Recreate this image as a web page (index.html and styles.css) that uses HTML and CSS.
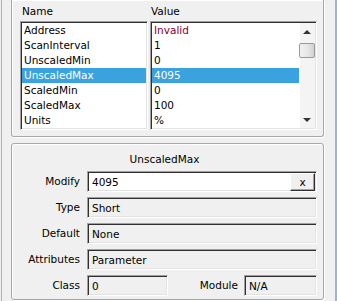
FILE: index.html
```html
<!DOCTYPE html>
<html lang="en">
<head>
    <meta charset="UTF-8">
    <meta name="viewport" content="width=device-width, initial-scale=1.0">
    <title>Parameter Editor</title>
    <link rel="stylesheet" href="styles.css">
</head>
<body>
    <div class="window">
        <!-- Parameter list -->
        <div class="group list-group">
            <div class="list-head">
                <span class="head-name">Name</span>
                <span class="head-value">Value</span>
            </div>
            <div class="lists">
                <div class="listbox names">
                    <div class="row">Address</div>
                    <div class="row">ScanInterval</div>
                    <div class="row">UnscaledMin</div>
                    <div class="row selected">UnscaledMax</div>
                    <div class="row">ScaledMin</div>
                    <div class="row">ScaledMax</div>
                    <div class="row">Units</div>
                </div>
                <div class="listbox values">
                    <div class="rows">
                        <div class="row invalid">Invalid</div>
                        <div class="row">1</div>
                        <div class="row">0</div>
                        <div class="row selected">4095</div>
                        <div class="row">0</div>
                        <div class="row">100</div>
                        <div class="row">%</div>
                    </div>
                    <div class="scrollbar">
                        <div class="scroll-btn"><span class="arrow-up"></span></div>
                        <div class="thumb"></div>
                        <div class="scroll-track"></div>
                        <div class="scroll-btn"><span class="arrow-down"></span></div>
                    </div>
                </div>
            </div>
        </div>

        <!-- Selected parameter details -->
        <div class="group detail-group">
            <div class="detail-title">UnscaledMax</div>
            <div class="form">
                <label class="label">Modify</label>
                <div class="field editable">
                    <span class="field-text">4095</span>
                    <button class="clear-button">x</button>
                </div>

                <label class="label">Type</label>
                <div class="field"><span class="field-text">Short</span></div>

                <label class="label">Default</label>
                <div class="field"><span class="field-text">None</span></div>

                <label class="label">Attributes</label>
                <div class="field"><span class="field-text">Parameter</span></div>

                <label class="label">Class</label>
                <div class="last-row">
                    <div class="field class-field"><span class="field-text">0</span></div>
                    <label class="label">Module</label>
                    <div class="field"><span class="field-text">N/A</span></div>
                </div>
            </div>
        </div>
    </div>
</body>
</html>
```

FILE: styles.css
```css
* {
    box-sizing: border-box;
}
body {
    margin: 0;
    background-color: #f0f0f0;
    font-family: "DejaVu Sans", Tahoma, sans-serif;
    font-size: 10.5px;
    color: #000;
    overflow: hidden;
}
.window {
    width: 336px;
    height: 301px;
    margin-left: 1px;
    padding: 0 10px 0 9px;
    border-left: 1px solid #8fb8e3;
    border-right: 2px solid #8fb8e3;
}
/* Etched group box */
.group {
    width: 313px;
    border: 1px solid #a8a8a8;
    border-radius: 3px;
    box-shadow: 1px 1px 0 #fff, inset 1px 1px 0 #fff;
}
.list-group {
    border-top: none;
    border-radius: 0 0 3px 3px;
    padding: 4px 6px 6px 8px;
}
.list-head,
.lists {
    display: grid;
    grid-template-columns: 128px 167px;
    column-gap: 2px;
}
.list-head {
    line-height: 15px;
    height: 15px;
    margin-bottom: 2px;
}
.head-name {
    padding-left: 2px;
}
.head-value {
    padding-left: 1px;
}
/* Sunken list boxes */
.listbox {
    height: 109px;
    background-color: #fff;
    border: 1px solid;
    border-color: #a0a0a0 #fff #fff #a0a0a0;
    box-shadow: inset 1px 1px 0 #303030, inset -1px -1px 0 #e3e3e3;
    padding: 1px;
}
.values {
    display: flex;
}
.rows {
    flex: 1;
}
.row {
    height: 15px;
    line-height: 15px;
    padding-left: 2px;
    white-space: nowrap;
}
.row.selected {
    background-color: #3aa2df;
    color: #fff;
}
.row.invalid {
    color: #8e0028;
}
.scrollbar {
    width: 16px;
    display: flex;
    flex-direction: column;
    background-color: #f4f4f4;
    box-shadow: inset 1px 0 0 #fff;
}
.scroll-btn {
    height: 17px;
    display: flex;
    align-items: center;
    justify-content: center;
}
.arrow-up {
    width: 0;
    height: 0;
    border-left: 4px solid transparent;
    border-right: 4px solid transparent;
    border-bottom: 4px solid #333;
}
.arrow-down {
    width: 0;
    height: 0;
    border-left: 4px solid transparent;
    border-right: 4px solid transparent;
    border-top: 4px solid #333;
}
.thumb {
    height: 15px;
    margin-top: 3px;
    border: 1px solid #9a9a9a;
    border-radius: 2px;
    background: linear-gradient(to right, #f2f2f2, #e4e4e4 60%, #d2d2d2);
}
.scroll-track {
    flex: 1;
}
/* Detail panel */
.detail-group {
    margin-top: 6px;
    height: 157px;
    padding: 8px 6px 3px 0;
}
.detail-title {
    text-align: center;
    line-height: 15px;
    margin-bottom: 4px;
}
.form {
    display: grid;
    grid-template-columns: 68px 1fr;
    grid-auto-rows: 21px;
    column-gap: 7px;
    row-gap: 5px;
}
.label {
    text-align: right;
    line-height: 21px;
    white-space: nowrap;
}
.field {
    display: flex;
    align-items: center;
    height: 21px;
    border: 1px solid;
    border-color: #a0a0a0 #fff #fff #a0a0a0;
    box-shadow: inset 1px 1px 0 #303030, inset -1px -1px 0 #e3e3e3;
    background-color: #f0f0f0;
    padding: 0 1px 0 4px;
}
.field.editable {
    background-color: #fff;
}
.field-text {
    flex: 1;
    white-space: nowrap;
}
.clear-button {
    width: 25px;
    height: 18px;
    margin-top: 1px;
    padding: 0;
    font-family: inherit;
    font-size: 10.5px;
    background-color: #f0f0f0;
    border: 1px solid;
    border-color: #fff #303030 #303030 #fff;
    box-shadow: inset -1px -1px 0 #a0a0a0;
}
.last-row {
    display: grid;
    grid-template-columns: 81px 1fr 73px;
    column-gap: 6px;
}
```
